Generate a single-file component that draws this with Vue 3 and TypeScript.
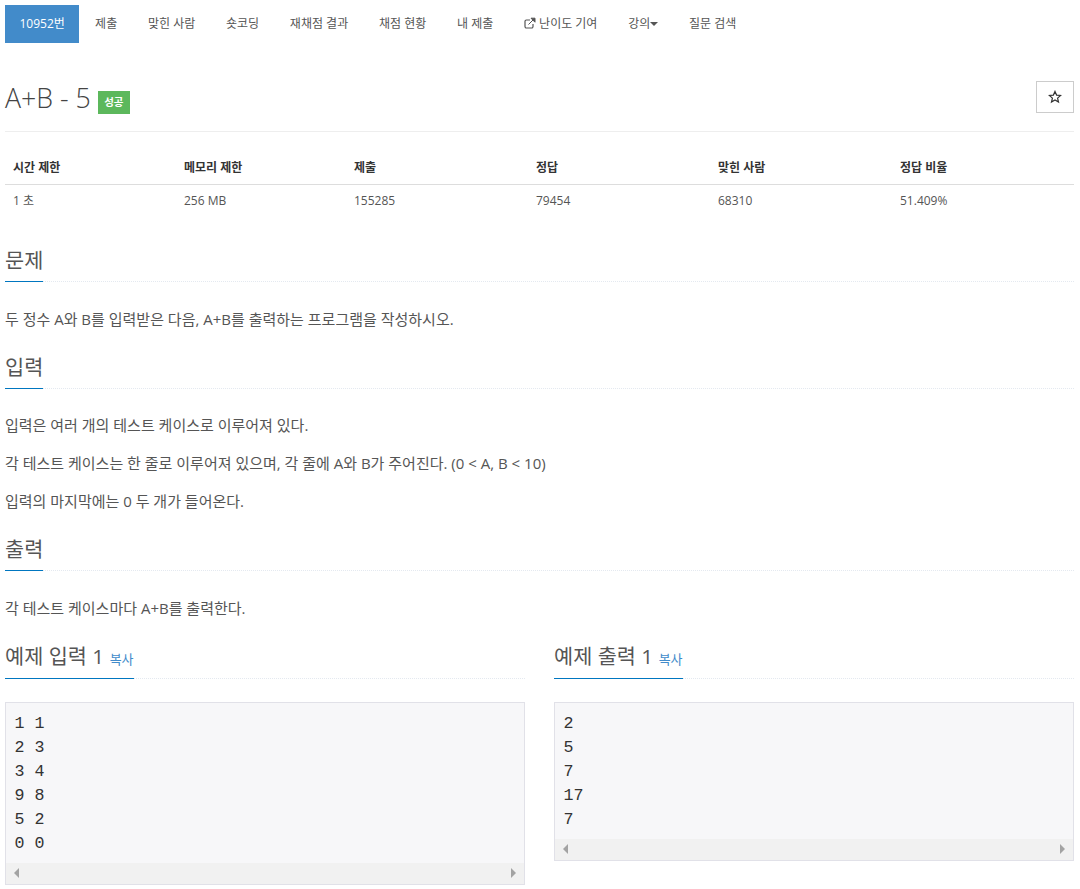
<script setup lang="ts">
interface Tab {
  label: string;
  external?: boolean;
  caret?: boolean;
  active?: boolean;
}

interface Sample {
  title: string;
  text: string;
}

const tabs: Tab[] = [
  { label: "10952번", active: true },
  { label: "제출" },
  { label: "맞힌 사람" },
  { label: "숏코딩" },
  { label: "재채점 결과" },
  { label: "채점 현황" },
  { label: "내 제출" },
  { label: "난이도 기여", external: true },
  { label: "강의", caret: true },
  { label: "질문 검색" },
];

const infoHeads = ["시간 제한", "메모리 제한", "제출", "정답", "맞힌 사람", "정답 비율"];
const infoValues = ["1 초", "256 MB", "155285", "79454", "68310", "51.409%"];

const samples: Sample[] = [
  { title: "예제 입력 1", text: "1 1\n2 3\n3 4\n9 8\n5 2\n0 0" },
  { title: "예제 출력 1", text: "2\n5\n7\n17\n7" },
];
</script>

<template>
  <div class="page">
    <ul class="tabs">
      <li v-for="tab in tabs" :key="tab.label" class="tab" :class="{ active: tab.active }">
        <svg v-if="tab.external" class="ext" viewBox="0 0 12 12" width="12" height="12">
          <path d="M9 7v2.6A1.4 1.4 0 0 1 7.6 11H2.4A1.4 1.4 0 0 1 1 9.6V4.4A1.4 1.4 0 0 1 2.4 3H6" fill="none" stroke="#555" stroke-width="1.2" />
          <path d="M4.5 7.5 10 2M7 1.2h4v4z" fill="#555" stroke="#555" stroke-width="1" />
        </svg>
        {{ tab.label }}<span v-if="tab.caret" class="caret"></span>
      </li>
    </ul>

    <div class="title-row">
      <h1 class="title">A+B - 5 <span class="badge">성공</span></h1>
      <button class="star" type="button" aria-label="즐겨찾기">
        <svg viewBox="0 0 14 14" width="14" height="14">
          <path d="M7 1.4 8.6 5.1l4 .35-3 2.65.9 3.9L7 9.95 3.5 12l.9-3.9-3-2.65 4-.35z" fill="none" stroke="#333" stroke-width="1.2" stroke-linejoin="miter" />
        </svg>
      </button>
    </div>

    <table class="info">
      <thead>
        <tr>
          <th v-for="head in infoHeads" :key="head">{{ head }}</th>
        </tr>
      </thead>
      <tbody>
        <tr>
          <td v-for="value in infoValues" :key="value">{{ value }}</td>
        </tr>
      </tbody>
    </table>

    <section class="section first">
      <div class="headline"><h2>문제</h2></div>
      <p>두 정수 A와 B를 입력받은 다음, A+B를 출력하는 프로그램을 작성하시오.</p>
    </section>

    <section class="section">
      <div class="headline"><h2>입력</h2></div>
      <p>입력은 여러 개의 테스트 케이스로 이루어져 있다.</p>
      <p>각 테스트 케이스는 한 줄로 이루어져 있으며, 각 줄에 A와 B가 주어진다. (0 &lt; A, B &lt; 10)</p>
      <p>입력의 마지막에는 0 두 개가 들어온다.</p>
    </section>

    <section class="section">
      <div class="headline"><h2>출력</h2></div>
      <p>각 테스트 케이스마다 A+B를 출력한다.</p>
    </section>

    <div class="samples">
      <div v-for="sample in samples" :key="sample.title" class="sample">
        <div class="headline">
          <h2>{{ sample.title }} <a class="copy">복사</a></h2>
        </div>
        <div class="pre-box">
          <pre>{{ sample.text }}</pre>
          <div class="scrollbar">
            <span class="arrow left"></span>
            <span class="arrow right"></span>
          </div>
        </div>
      </div>
    </div>
  </div>
</template>

<style>
body {
  background: #fff;
}
</style>

<style scoped>
.page {
  padding: 5px 6px 0 5px;
  font-family: "Open Sans", "Noto Sans CJK KR", sans-serif;
  font-size: 14px;
  line-height: 22px;
  color: #555;
}

.tabs {
  display: flex;
  margin: 0;
  padding: 0;
  list-style: none;
}

.tab {
  padding: 8px 15px;
  margin-right: 0.75px;
  font-size: 12px;
  color: #555;
  white-space: nowrap;
}

.tab.active {
  padding: 8px 14.5px;
  background: #428bca;
  color: #fff;
}

.ext {
  vertical-align: -1px;
}

.caret {
  display: inline-block;
  vertical-align: 2px;
  border-top: 4px solid #555;
  border-left: 4px solid transparent;
  border-right: 4px solid transparent;
}

.title-row {
  display: flex;
  justify-content: space-between;
  align-items: flex-start;
  margin-top: 38px;
  height: 50px;
  border-bottom: 1px solid #eee;
}

.title {
  margin: 0;
  font-size: 26.7px;
  font-weight: 300;
  line-height: 34px;
  color: #444;
}

.badge {
  display: inline-block;
  vertical-align: 2px;
  padding: 0 6.5px;
  background: #5cb85c;
  color: #fff;
  font-size: 10.5px;
  font-weight: 700;
  line-height: 23px;
}

.star {
  display: flex;
  align-items: center;
  justify-content: center;
  width: 38px;
  height: 32px;
  padding: 0;
  background: #fff;
  border: 1px solid #ccc;
}

.info {
  width: 100%;
  margin-top: 18px;
  border-collapse: collapse;
  table-layout: fixed;
}

.info th {
  box-sizing: border-box;
  padding: 7px 8px 5px;
  font-size: 12px;
  font-weight: 700;
  color: #333;
  text-align: left;
  border-bottom: 1px solid #ddd;
}

.info td {
  padding: 5px 8px 4px;
  font-size: 12px;
  color: #555;
}

.info th:nth-child(1) { width: 171px; }
.info th:nth-child(2) { width: 170px; }
.info th:nth-child(3),
.info th:nth-child(4),
.info th:nth-child(5) { width: 182px; }

.section {
  margin-top: 22px;
}

.section.first {
  margin-top: 30px;
}

.section p {
  margin: 0 0 14px;
  font-size: 15px;
  line-height: 24px;
  color: #555;
}

.headline {
  margin-bottom: 24.5px;
  border-bottom: 1px dotted #e4e9f0;
}

.headline h2 {
  display: inline-block;
  margin: 0 0 -1px;
  padding-bottom: 7px;
  font-size: 20.8px;
  font-weight: 400;
  line-height: 28px;
  color: #555;
  border-bottom: 1px solid #0076c0;
}

.copy {
  font-size: 13px;
  color: #428bca;
}

.samples {
  display: grid;
  grid-template-columns: 1fr 1fr;
  align-items: start;
  column-gap: 29px;
  margin-top: 22px;
}

.sample .headline {
  margin-bottom: 23px;
}

.sample .headline h2 {
  padding-bottom: 5px;
}

.pre-box {
  background: #f7f7f9;
  border: 1px solid #e1e1e8;
}

.pre-box pre {
  margin: 0;
  padding: 9px 9px 7px 8.5px;
  font-family: "Liberation Mono", monospace;
  font-size: 16.67px;
  line-height: 24px;
  color: #333;
}

.scrollbar {
  display: flex;
  justify-content: space-between;
  align-items: center;
  height: 21px;
  padding: 0 8px;
  background: #f1f1f1;
}

.arrow {
  border-top: 5px solid transparent;
  border-bottom: 5px solid transparent;
}

.arrow.left {
  border-right: 5px solid #a3a3a3;
}

.arrow.right {
  border-left: 5px solid #a3a3a3;
}
</style>
